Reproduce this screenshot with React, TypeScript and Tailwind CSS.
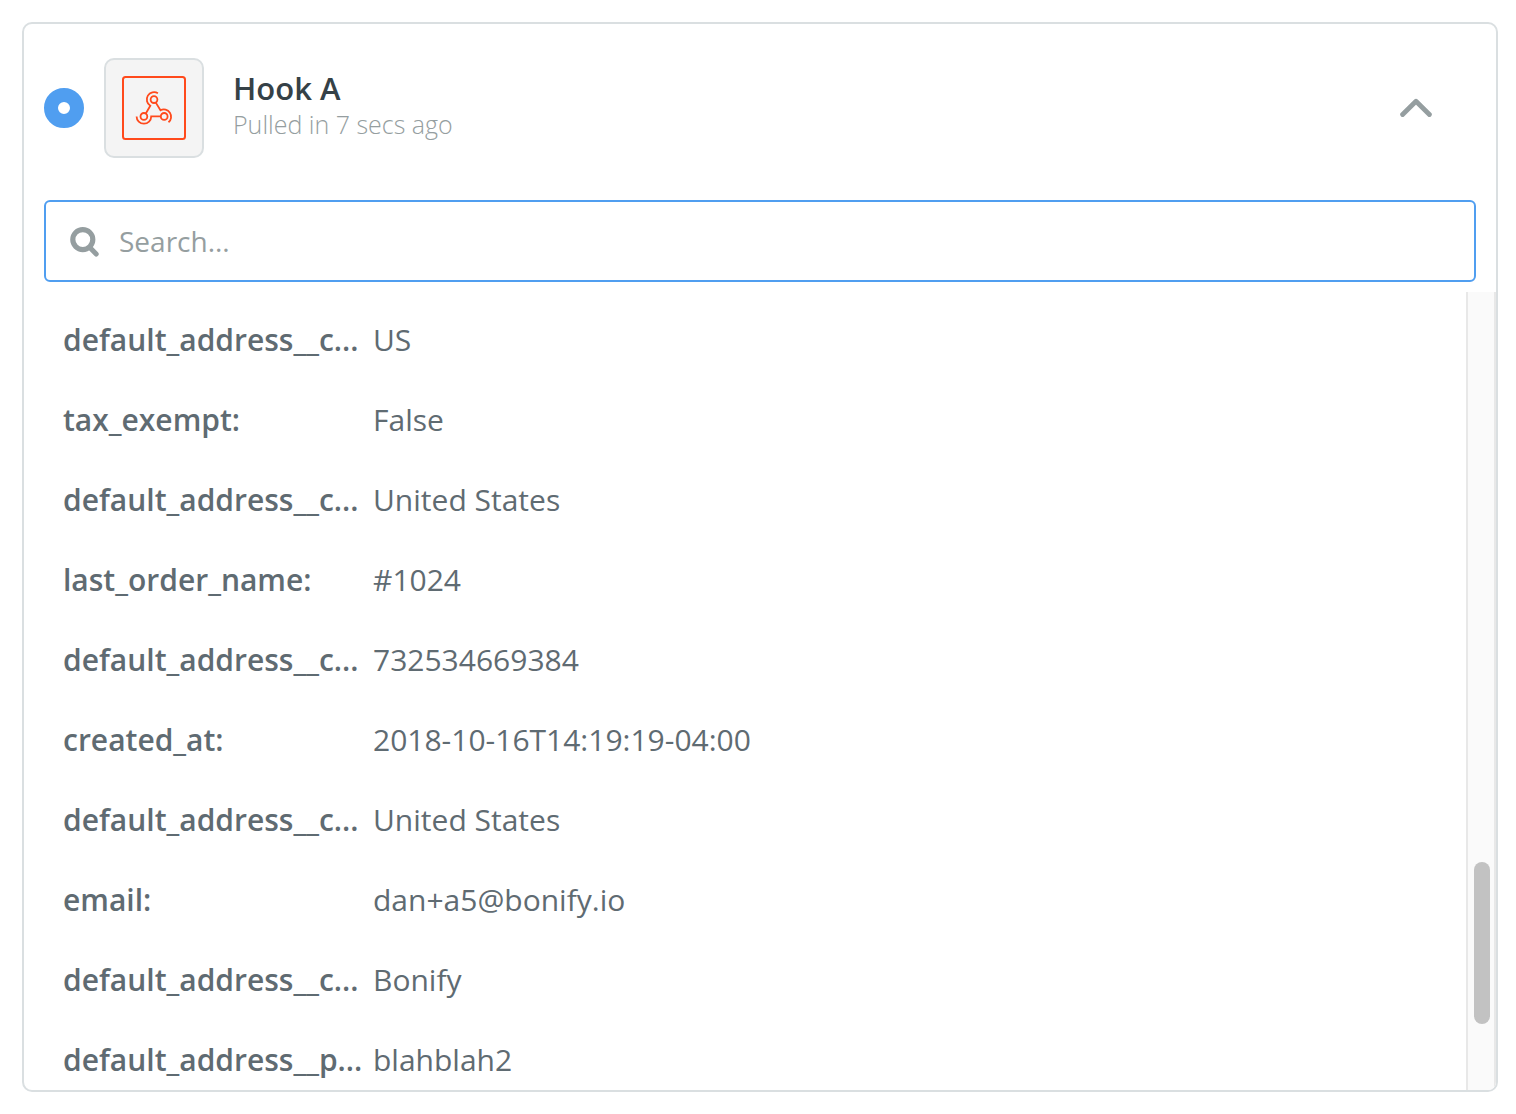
import React from 'react';

interface Field {
  label: string;
  value: string;
}

const FIELDS: Field[] = [
  { label: 'default_address__c...', value: 'US' },
  { label: 'tax_exempt:', value: 'False' },
  { label: 'default_address__c...', value: 'United States' },
  { label: 'last_order_name:', value: '#1024' },
  { label: 'default_address__c...', value: '732534669384' },
  { label: 'created_at:', value: '2018-10-16T14:19:19-04:00' },
  { label: 'default_address__c...', value: 'United States' },
  { label: 'email:', value: 'dan+a5@bonify.io' },
  { label: 'default_address__c...', value: 'Bonify' },
  { label: 'default_address__p...', value: 'blahblah2' },
];

const WebhookIcon: React.FC = () => (
  <svg className="w-16 h-16" viewBox="0 0 64 64" fill="none" stroke="#ff4a1c" strokeWidth="1.8">
    <rect x="1" y="1" width="62" height="62" rx="2.5" strokeWidth="2" />
    <circle cx="32" cy="23.6" r="3.4" />
    <circle cx="21.9" cy="40.4" r="3.4" />
    <circle cx="42.2" cy="40.4" r="3.4" />
    <path d="M35.9 17.2A7.3 7.3 0 0 0 28.3 29.7L23.8 37.5" />
    <path d="M14.6 40.4A7.3 7.3 0 0 0 29.2 40.4H38.8" />
    <path d="M33.8 26.6L38.5 34.2A7.3 7.3 0 0 1 46.5 46.3" />
  </svg>
);

const SearchIcon: React.FC = () => (
  <svg className="w-8 h-8 shrink-0" viewBox="0 0 32 32" fill="none" stroke="#959ea0">
    <circle cx="14.8" cy="14.6" r="10" strokeWidth="5.2" />
    <path d="M21.8 22.6L28.2 29" strokeWidth="5" strokeLinecap="round" />
  </svg>
);

const ChevronUp: React.FC = () => (
  <svg className="w-8 h-5" viewBox="0 0 32 20" fill="none" stroke="#959ea0" strokeWidth="4.8" strokeLinecap="round" strokeLinejoin="round">
    <path d="M2.6 16.5L16 3.2L29.4 16.5" />
  </svg>
);

const StepHeader: React.FC = () => (
  <header className="flex items-center pt-[34px] pb-[42px] pl-5 pr-16">
    <label className="flex shrink-0">
      <input
        type="radio"
        name="sample"
        defaultChecked
        aria-label="Hook A"
        className="appearance-none w-10 h-10 rounded-full bg-white border-[14px] border-[#509ef0]"
      />
    </label>
    <div className="flex items-center justify-center shrink-0 w-[100px] h-[100px] ml-5 bg-[#f4f4f4] rounded-[10px] border-2 border-[#dadfe1]">
      <WebhookIcon />
    </div>
    <div className="flex-1 min-w-0 ml-[29px] pb-1">
      <h2 className="text-[31px] leading-9 font-semibold text-[#354147]">Hook A</h2>
      <p className="text-[25px] leading-9 font-light text-[#959ea0]">Pulled in 7 secs ago</p>
    </div>
    <button type="button" aria-label="Collapse" className="shrink-0">
      <ChevronUp />
    </button>
  </header>
);

const SearchBox: React.FC = () => (
  <div className="flex items-center gap-[19px] mx-5 mb-[10px] h-[82px] shrink-0 pl-[22px] pr-5 border-2 border-[#509ef0] rounded-md">
    <SearchIcon />
    <input
      type="text"
      aria-label="Search"
      placeholder="Search..."
      className="flex-1 min-w-0 text-[28px] text-[#5f6b72] placeholder:text-[#959ea0] outline-none"
    />
  </div>
);

const Scrollbar: React.FC = () => (
  <div className="relative w-[30px] shrink-0 bg-[#fafafa] border-x-2 border-[#e8e8e8]">
    <div className="absolute left-[6px] top-[71.4%] w-4 h-[20.3%] rounded-full bg-[#c2c2c2]" />
  </div>
);

export default function App() {
  return (
    <main className="h-screen bg-white py-[22px] pl-[22px] pr-[18px] font-['Open_Sans',sans-serif]">
      <section className="flex flex-col h-full overflow-hidden bg-white border-2 border-[#dadfe1] rounded-[10px]">
        <StepHeader />
        <SearchBox />
        <div className="flex flex-1 min-h-0">
          <dl className="flex-1 min-w-0 overflow-hidden pt-[7px] pl-[39px] text-[30px] text-[#5f6b72]">
            {FIELDS.map((field, i) => (
              <div key={i} className="flex items-center gap-[10px] h-20">
                <dt className="w-[300px] shrink-0 whitespace-nowrap font-semibold">{field.label}</dt>
                <dd className="truncate">{field.value}</dd>
              </div>
            ))}
          </dl>
          <Scrollbar />
        </div>
      </section>
    </main>
  );
}
